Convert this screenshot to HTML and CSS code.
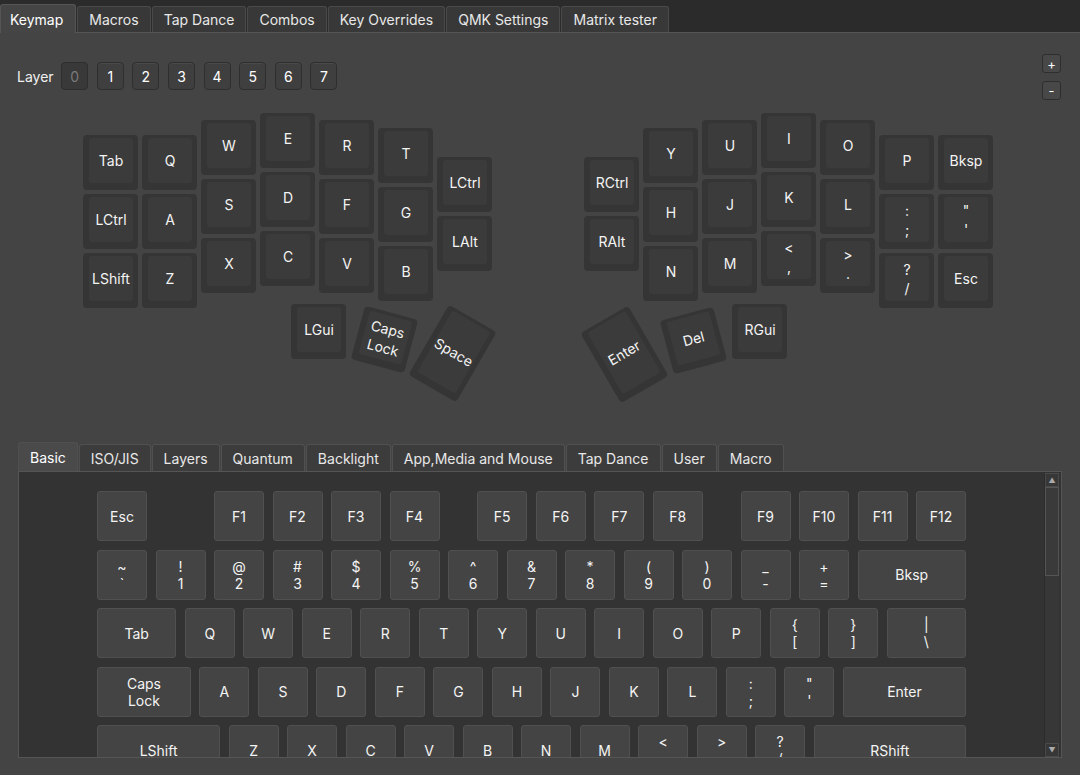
FILE: index.html
```html
<!DOCTYPE html>
<html lang="en">
<head>
    <meta charset="UTF-8">
    <title>Keymap</title>
    <link rel="stylesheet" href="styles.css">
</head>
<body>
    <div class="app">
        <div class="tabbar">
            <div class="tab active">Keymap</div>
            <div class="tab">Macros</div>
            <div class="tab">Tap Dance</div>
            <div class="tab">Combos</div>
            <div class="tab">Key Overrides</div>
            <div class="tab">QMK Settings</div>
            <div class="tab">Matrix tester</div>
        </div>
        <div class="main">
            <div class="top-row">
                <div class="layer-row">
                    <span class="layer-label">Layer</span>
                    <div class="layer-btn off">0</div>
                    <div class="layer-btn">1</div>
                    <div class="layer-btn">2</div>
                    <div class="layer-btn">3</div>
                    <div class="layer-btn">4</div>
                    <div class="layer-btn">5</div>
                    <div class="layer-btn">6</div>
                    <div class="layer-btn">7</div>
                </div>
                <div class="zoom-btns">
                    <div class="zoom-btn">+</div>
                    <div class="zoom-btn">-</div>
                </div>
            </div>
            <div class="split" id="split"></div>
            <div class="code-tabs">
                <div class="ctab active">Basic</div>
                <div class="ctab">ISO/JIS</div>
                <div class="ctab">Layers</div>
                <div class="ctab">Quantum</div>
                <div class="ctab">Backlight</div>
                <div class="ctab">App,Media and Mouse</div>
                <div class="ctab">Tap Dance</div>
                <div class="ctab">User</div>
                <div class="ctab">Macro</div>
            </div>
            <div class="code-panel">
                <div class="kb-area" id="codes"></div>
                <div class="scrollbar">
                    <div class="sb-btn">&#9650;</div>
                    <div class="sb-thumb"></div>
                    <div class="sb-track"></div>
                    <div class="sb-btn">&#9660;</div>
                </div>
            </div>
        </div>
    </div>
    <script>
        // split keyboard: label, left, top (page px), width, height, rotation
        const SPLIT_TOP = 100;
        const splitKeys = [
            ["Tab", 83, 135], ["LCtrl", 83, 194], ["LShift", 83, 253],
            ["Q", 142, 135], ["A", 142, 194], ["Z", 142, 253],
            ["W", 201, 120], ["S", 201, 179], ["X", 201, 238],
            ["E", 260, 113], ["D", 260, 172], ["C", 260, 231],
            ["R", 319, 120], ["F", 319, 179], ["V", 319, 238],
            ["T", 378, 128], ["G", 378, 187], ["B", 378, 246],
            ["LCtrl", 437, 157], ["LAlt", 437, 216],
            ["LGui", 291, 304],
            ["Caps\nLock", 357, 312, 55, 55, 15],
            ["Space", 424.5, 312.5, 55, 81, 30],

            ["RCtrl", 584, 157], ["RAlt", 584, 216],
            ["Y", 643, 128], ["H", 643, 187], ["N", 643, 246],
            ["U", 702, 120], ["J", 702, 179], ["M", 702, 238],
            ["I", 761, 113], ["K", 761, 172], ["<\n,", 761, 231],
            ["O", 820, 120], ["L", 820, 179], [">\n.", 820, 238],
            ["P", 879, 135], [":\n;", 879, 194], ["?\n/", 879, 253],
            ["Bksp", 938, 135], ["\"\n'", 938, 194], ["Esc", 938, 253],
            ["RGui", 732, 304],
            ["Del", 665.5, 312.5, 55, 55, -15],
            ["Enter", 597, 314, 55, 81, -30]
        ];

        const split = document.getElementById("split");
        splitKeys.forEach(([label, x, y, w = 55, h = 55, rot = 0]) => {
            const key = document.createElement("div");
            key.className = "sk";
            key.style.left = x + "px";
            key.style.top = (y - SPLIT_TOP) + "px";
            key.style.width = w + "px";
            key.style.height = h + "px";
            if (rot) key.style.transform = `rotate(${rot}deg)`;
            const face = document.createElement("div");
            face.className = "sk-face";
            face.textContent = label;
            key.appendChild(face);
            split.appendChild(key);
        });

        // keycode picker, widths in key units (null = blank space)
        const U = 58.5, GAP = 8.5;
        const rows = [
            [["Esc"], [null, 1], ["F1"], ["F2"], ["F3"], ["F4"], [null, 0.5], ["F5"], ["F6"], ["F7"], ["F8"], [null, 0.5], ["F9"], ["F10"], ["F11"], ["F12"]],
            [["~\n`"], ["!\n1"], ["@\n2"], ["#\n3"], ["$\n4"], ["%\n5"], ["^\n6"], ["&\n7"], ["*\n8"], ["(\n9"], [")\n0"], ["_\n-"], ["+\n="], ["Bksp", 2]],
            [["Tab", 1.5], ["Q"], ["W"], ["E"], ["R"], ["T"], ["Y"], ["U"], ["I"], ["O"], ["P"], ["{\n["], ["}\n]"], ["|\n\\", 1.5]],
            [["Caps\nLock", 1.75], ["A"], ["S"], ["D"], ["F"], ["G"], ["H"], ["J"], ["K"], ["L"], [":\n;"], ["\"\n'"], ["Enter", 2.25]],
            [["LShift", 2.25], ["Z"], ["X"], ["C"], ["V"], ["B"], ["N"], ["M"], ["<\n,"], [">\n."], ["?\n/"], ["RShift", 2.75]]
        ];

        const codes = document.getElementById("codes");
        rows.forEach(row => {
            const r = document.createElement("div");
            r.className = "ck-row";
            row.forEach(([label, u = 1]) => {
                const k = document.createElement("div");
                k.className = label === null ? "ck-gap" : "ck";
                k.style.width = (u * U - GAP) + "px";
                if (label !== null) k.textContent = label;
                r.appendChild(k);
            });
            codes.appendChild(r);
        });
    </script>
</body>
</html>
```

FILE: styles.css
```css
body {
    margin: 0;
    background: #444444;
    font-family: Inter, "Noto Sans", sans-serif;
    font-size: 14px;
    color: #f0f0f0;
}
.app {
    width: 1080px;
    height: 775px;
    overflow: hidden;
    display: flex;
    flex-direction: column;
}

/* top tabs */
.tabbar {
    height: 32px;
    background: #2b2b2b;
    border-bottom: 1px solid #555;
    display: flex;
    align-items: flex-end;
    gap: 1px;
}
.tab {
    height: 26px;
    padding: 0 11px;
    box-sizing: border-box;
    background: #383838;
    border: 1px solid #4a4a4a;
    border-bottom: none;
    border-radius: 3px 3px 0 0;
    display: flex;
    align-items: center;
    color: #e8e8e8;
}
.tab.active {
    height: 29px;
    margin-bottom: -1px;
    padding: 0 12px 0 9px;
    background: #454545;
    border-color: #555;
    color: #fff;
}

.main {
    flex: 1;
    display: flex;
    flex-direction: column;
}
.top-row {
    height: 67px;
    box-sizing: border-box;
    padding: 21px 19px 0 17px;
    display: flex;
    justify-content: space-between;
    align-items: flex-start;
}
.layer-row {
    margin-top: 8px;
    display: flex;
    align-items: center;
    gap: 8.6px;
}
.layer-label {
    margin-right: -1px;
}
.layer-btn {
    width: 27px;
    height: 28px;
    box-sizing: border-box;
    border: 1px solid #2e2e2e;
    border-radius: 4px;
    background: #3f3f3f;
    box-shadow: inset 0 1px 0 #4a4a4a;
    display: flex;
    align-items: center;
    justify-content: center;
    color: #fff;
}
.layer-btn.off {
    background: #393939;
    box-shadow: none;
    color: #7a7a7a;
}
.zoom-btns {
    display: flex;
    flex-direction: column;
    gap: 8px;
}
.zoom-btn {
    width: 19px;
    height: 19px;
    box-sizing: border-box;
    border: 1px solid #2e2e2e;
    border-radius: 3px;
    background: #484848;
    display: flex;
    align-items: center;
    justify-content: center;
    font-size: 13px;
    color: #fff;
}

/* split keyboard canvas */
.split {
    position: relative;
    height: 342px;
}
.sk {
    position: absolute;
    box-sizing: border-box;
    padding: 3px 5px 7px 6px;
    background: #353535;
    border-radius: 4px;
    display: flex;
}
.sk-face {
    flex: 1;
    background: #3b3b3b;
    border-radius: 3px;
    display: flex;
    align-items: center;
    justify-content: center;
    text-align: center;
    white-space: pre-line;
    line-height: 19px;
    color: #f4f4f4;
}

/* keycode tabs */
.code-tabs {
    height: 29px;
    padding-left: 18px;
    display: flex;
    align-items: flex-end;
    gap: 1px;
}
.ctab {
    height: 27px;
    padding: 0 11px;
    box-sizing: border-box;
    background: #3c3c3c;
    border: 1px solid #505050;
    border-bottom: none;
    border-radius: 3px 3px 0 0;
    display: flex;
    align-items: center;
    color: #e8e8e8;
}
.ctab.active {
    height: 29px;
    background: #4a4a4a;
    color: #fff;
}
.code-panel {
    margin: 0 18px;
    height: 287px;
    box-sizing: border-box;
    border: 1px solid #555;
    background: #333333;
    display: flex;
}
.kb-area {
    flex: 1;
    overflow: hidden;
    padding-top: 19px;
    display: flex;
    flex-direction: column;
    align-items: center;
    gap: 8.5px;
}
.ck-row {
    display: flex;
    gap: 8.5px;
}
.ck, .ck-gap {
    flex: none;
    height: 50px;
}
.ck {
    box-sizing: border-box;
    background: #444444;
    border: 1px solid #505050;
    border-radius: 3px;
    display: flex;
    align-items: center;
    justify-content: center;
    text-align: center;
    white-space: pre-line;
    line-height: 17px;
    color: #f4f4f4;
}

/* scrollbar */
.scrollbar {
    width: 14px;
    margin: 1px 2px 0 0;
    background: #373737;
    border-left: 1px solid #2c2c2c;
    display: flex;
    flex-direction: column;
}
.sb-btn {
    height: 14px;
    box-sizing: border-box;
    border: 1px solid #4a4a4a;
    display: flex;
    align-items: center;
    justify-content: center;
    font-size: 7px;
    color: #aaa;
}
.sb-thumb {
    height: 89px;
    box-sizing: border-box;
    border: 1px solid #555;
    background: #3a3a3a;
}
.sb-track {
    flex: 1;
}
```
